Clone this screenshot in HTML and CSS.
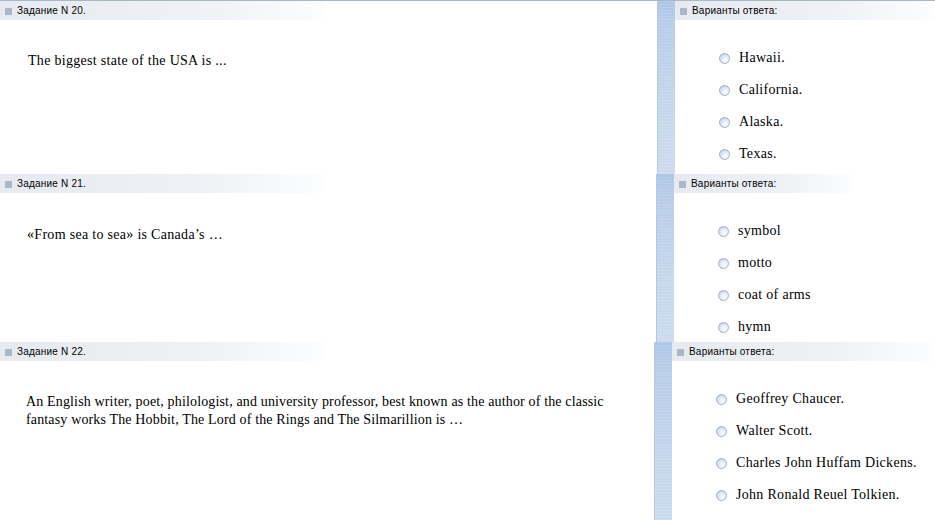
FILE: index.html
```html
<!DOCTYPE html>
<html lang="ru">
<head>
    <meta charset="UTF-8">
    <title>Тест</title>
    <link rel="stylesheet" href="styles.css">
</head>
<body>

<div class="page">

    <div class="task task-20">
        <div class="question">
            <div class="caption"><span class="mark"></span>Задание N 20.</div>
            <p class="text">The biggest state of the USA is ...</p>
        </div>
        <div class="divider"></div>
        <div class="answers">
            <div class="caption"><span class="mark"></span>Варианты ответа:</div>
            <ul class="options">
                <li><span class="radio"></span>Hawaii.</li>
                <li><span class="radio"></span>California.</li>
                <li><span class="radio"></span>Alaska.</li>
                <li><span class="radio"></span>Texas.</li>
            </ul>
        </div>
    </div>

    <div class="task task-21">
        <div class="question">
            <div class="caption"><span class="mark"></span>Задание N 21.</div>
            <p class="text">«From sea to sea» is Canada’s …</p>
        </div>
        <div class="divider"></div>
        <div class="answers">
            <div class="caption short"><span class="mark"></span>Варианты ответа:</div>
            <ul class="options">
                <li><span class="radio"></span>symbol</li>
                <li><span class="radio"></span>motto</li>
                <li><span class="radio"></span>coat of arms</li>
                <li><span class="radio"></span>hymn</li>
            </ul>
        </div>
    </div>

    <div class="task task-22">
        <div class="question">
            <div class="caption"><span class="mark"></span>Задание N 22.</div>
            <p class="text">An English writer, poet, philologist, and university professor, best known as the author of the classic fantasy works The Hobbit, The Lord of the Rings and The Silmarillion is …</p>
        </div>
        <div class="divider"></div>
        <div class="answers">
            <div class="caption"><span class="mark"></span>Варианты ответа:</div>
            <ul class="options">
                <li><span class="radio"></span>Geoffrey Chaucer.</li>
                <li><span class="radio"></span>Walter Scott.</li>
                <li><span class="radio"></span>Charles John Huffam Dickens.</li>
                <li><span class="radio"></span>John Ronald Reuel Tolkien.</li>
            </ul>
        </div>
    </div>

</div>

</body>
</html>
```

FILE: styles.css
```css
/* page */
body {
    margin: 0;
    padding: 0;
    background: #fff;
    font-family: "Liberation Serif", "Times New Roman", serif;
    color: #000;
}

.page {
    width: 935px;
    height: 520px;
    overflow: hidden;
    border-top: 1px solid #a9b6c8;
    box-sizing: border-box;
}

/* one task = question | bar | answers */
.task {
    display: grid;
    grid-template-columns: 657px 18px 1fr;
}
.task-20 { height: 173px; }
.task-21 { height: 168px; grid-template-columns: 656px 18px 1fr; }
.task-22 { height: 200px; grid-template-columns: 654px 18px 1fr; }

/* grey header strip */
.caption {
    height: 19px;
    display: flex;
    align-items: center;
    font-family: "Liberation Sans", Arial, sans-serif;
    font-size: 10px;
    letter-spacing: 0.2px;
    color: #000;
    background: linear-gradient(to right, #e6ebf1 0%, #eef1f5 60%, #fbfcfd 97%, #fff 100%);
}
.question .caption {
    width: 326px;
}
.answers .caption {
    padding-left: 5px;
}
.answers .caption.short {
    width: 175px;
}

.mark {
    width: 7px;
    height: 7px;
    background: #aab7c7;
    margin: 1px 5px 0 5px;
}
.answers .mark {
    margin-left: 0;
}

/* question text */
.text {
    margin: 0;
    padding: 32px 40px 0 28px;
    font-size: 14px;
    line-height: 18px;
    letter-spacing: 0.3px;
}
.task-21 .text { padding-left: 27px; padding-top: 33px; }
.task-22 .text {
    padding: 32px 30px 0 26px;
    letter-spacing: 0.15px;
}

/* blue bar */
.divider {
    background:
        repeating-linear-gradient(to bottom, rgba(255,255,255,0.12) 0 1px, rgba(255,255,255,0) 1px 3px),
        linear-gradient(to bottom, #abc5e5 0px, #b6cce8 19px, #c5d6ec 60%, #ccdbee 100%);
    border-left: 1px solid #b6c8df;
}

/* answers */
.options {
    list-style: none;
    margin: 0;
    padding: 22px 0 0 44px;
    font-size: 14px;
    letter-spacing: 0.3px;
}

.options li {
    height: 32px;
    display: flex;
    align-items: center;
    line-height: 18px;
}

.radio {
    width: 9px;
    height: 9px;
    border: 1px solid #9bb0cb;
    border-radius: 50%;
    background: radial-gradient(circle at 65% 70%, #ffffff 0%, #e3ebf5 45%, #b9c9de 100%);
    margin-right: 9px;
    flex-shrink: 0;
}
```
